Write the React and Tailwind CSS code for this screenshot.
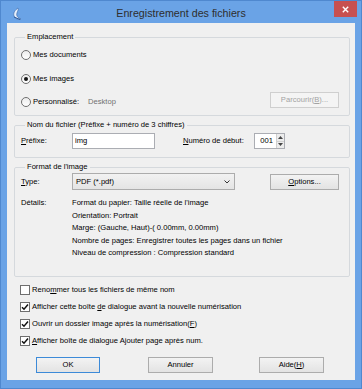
import React from "react";

const U = ({ children }) => <span className="underline underline-offset-[1px]">{children}</span>;

function Radio({ checked }) {
  return (
    <span className="w-[10px] h-[10px] shrink-0 rounded-full border border-[#6f6f6f] bg-gradient-to-b from-[#ececec] to-white flex items-center justify-center">
      {checked && <span className="w-[4px] h-[4px] rounded-full bg-[#151515]" />}
    </span>
  );
}

function Check({ checked }) {
  return (
    <span className="w-[10px] h-[10px] shrink-0 border border-[#6f6f6f] bg-white flex items-center justify-center">
      {checked && (
        <svg width="8" height="8" viewBox="0 0 8 8">
          <path d="M1 4.2 L3 6.2 L7 1.6" fill="none" stroke="#111" strokeWidth="1.5" />
        </svg>
      )}
    </span>
  );
}

function Btn({ children, disabled, def, className = "" }) {
  return (
    <div
      className={
        "h-[16px] flex items-center justify-center border " +
        (disabled
          ? "border-[#cfcfcf] bg-[#f4f4f4] text-[#a3a3a3] "
          : def
          ? "border-[#3c8ad8] bg-gradient-to-b from-[#f3f3f3] to-[#e3e3e3] text-black "
          : "border-[#acacac] bg-gradient-to-b from-[#f3f3f3] to-[#e3e3e3] text-black ") +
        className
      }
    >
      {children}
    </div>
  );
}

export default function App() {
  return (
    <div className="w-[362px] h-[389px] bg-[#6aa3e6] border border-[#4f88cf] flex flex-col font-['Liberation_Sans',Arial,sans-serif] text-[7.6px] leading-[10px] text-black">
      {/* Title bar */}
      <div className="h-[22px] shrink-0 grid grid-cols-[1fr_auto_1fr]">
        <div className="flex items-start pl-[11px] pt-[6px]">
          <svg width="10" height="14" viewBox="0 0 10 14">
            <path d="M6 1 C3 3 1 6 2 9 C3 12 7 13 9 12 C6 11 4 9 5 6 C5.5 4 7 2 6 1 Z" fill="#e8f0fb" stroke="#3f6fb0" strokeWidth="0.7" />
            <path d="M2 10 L8 12.5" stroke="#2d5a9c" strokeWidth="1" />
          </svg>
        </div>
        <div className="flex items-center text-[10.7px] text-[#2e2e2e] pt-[1px]">Enregistrement des fichiers</div>
        <div className="flex justify-end items-start pr-[4px]">
          <div className="w-[23px] h-[16px] bg-[#c75050] flex items-center justify-center">
            <svg width="7" height="7" viewBox="0 0 7 7">
              <path d="M0.8 0.8 L6.2 6.2 M6.2 0.8 L0.8 6.2" stroke="white" strokeWidth="1.4" />
            </svg>
          </div>
        </div>
      </div>

      {/* Client area */}
      <div className="mx-[6px] h-[357px] shrink-0 bg-[#f0f0f0] flex flex-col">
        {/* Emplacement */}
        <fieldset className="mt-[9px] ml-[7px] mr-[5px] border border-[#d5d9dd] rounded-[2px] pl-[6px] pr-[10px] pt-[6px] pb-[8px]">
          <legend className="ml-[4px] px-[2px] leading-[10px]">Emplacement</legend>
          <div className="h-[14px] flex items-center gap-[2px]">
            <Radio />
            <span>Mes documents</span>
          </div>
          <div className="h-[14px] mt-[10px] flex items-center gap-[2px]">
            <Radio checked />
            <span>Mes images</span>
          </div>
          <div className="h-[15px] mt-[6px] flex items-start">
            <div className="h-[14px] mt-[3px] flex items-center gap-[2px]">
              <Radio />
              <span className="w-[53px]">Personnalisé:</span>
              <span className="text-[#707070]">Desktop</span>
            </div>
            <Btn disabled className="ml-auto w-[69px] h-[15px]">
              Parcourir(<U>B</U>)...
            </Btn>
          </div>
        </fieldset>

        {/* Nom du fichier */}
        <fieldset className="mt-[4px] ml-[7px] mr-[5px] border border-[#d5d9dd] rounded-[2px] pl-[6px] pt-[3px] pb-[8px]">
          <legend className="ml-[4px] px-[2px] leading-[10px]">Nom du fichier (Préfixe + numéro de 3 chiffres)</legend>
          <div className="h-[16px] flex items-center">
            <span className="w-[51px]">
              <U>P</U>réfixe:
            </span>
            <div className="w-[83px] h-[16px] bg-white border border-[#abadb3] flex items-center pl-[2px]">img</div>
            <span className="ml-[28px] w-[71px]">
              <U>N</U>uméro de début:
            </span>
            <div className="w-[31px] h-[16px] bg-white border border-[#abadb3] flex items-center">
              <span className="flex-1 text-right pr-[3px]">001</span>
              <div className="w-[8px] h-full flex flex-col border-l border-[#d0d0d0]">
                <div className="flex-1 bg-[#ececec] flex items-center justify-center border-b border-[#d0d0d0]">
                  <svg width="5" height="3" viewBox="0 0 5 3"><path d="M0 3 L2.5 0 L5 3 Z" fill="#444" /></svg>
                </div>
                <div className="flex-1 bg-[#ececec] flex items-center justify-center">
                  <svg width="5" height="3" viewBox="0 0 5 3"><path d="M0 0 L2.5 3 L5 0 Z" fill="#444" /></svg>
                </div>
              </div>
            </div>
          </div>
        </fieldset>

        {/* Format de l'image */}
        <fieldset className="mt-[4px] ml-[7px] mr-[5px] border border-[#d5d9dd] rounded-[2px] pl-[6px] pt-[1px] pb-[16px]">
          <legend className="ml-[4px] px-[2px] leading-[10px]">Format de l'image</legend>
          <div className="h-[17px] flex items-center">
            <span className="w-[51px]">
              <U>T</U>ype:
            </span>
            <div className="w-[163px] h-[17px] border border-[#acacac] bg-gradient-to-b from-[#f2f2f2] to-[#e4e4e4] flex items-center pl-[3px] pr-[4px]">
              <span className="flex-1">PDF (*.pdf)</span>
              <svg width="6" height="4" viewBox="0 0 6 4">
                <path d="M0.5 0.5 L3 3 L5.5 0.5" fill="none" stroke="#333" strokeWidth="1" />
              </svg>
            </div>
            <Btn className="ml-[35px] w-[69px]">
              <U>O</U>ptions...
            </Btn>
          </div>
          <div className="mt-[7px] flex leading-[12.5px]">
            <span className="w-[51px] shrink-0">Détails:</span>
            <div className="flex flex-col">
              <span>Format du papier: Taille réelle de l'image</span>
              <span>Orientation: Portrait</span>
              <span>Marge: (Gauche, Haut)-( 0.00mm, 0.00mm)</span>
              <span>Nombre de pages: Enregistrer toutes les pages dans un fichier</span>
              <span>Niveau de compression : Compression standard</span>
            </div>
          </div>
        </fieldset>

        {/* Checkboxes */}
        <div className="mt-[7px] pl-[13px] flex flex-col gap-[5px]">
          <div className="h-[12px] flex items-center gap-[2px]">
            <Check />
            <span>
              Reno<U>m</U>mer tous les fichiers de même nom
            </span>
          </div>
          <div className="h-[12px] flex items-center gap-[2px]">
            <Check checked />
            <span>
              Afficher cette boîte <U>d</U>e dialogue avant la nouvelle numérisation
            </span>
          </div>
          <div className="h-[12px] flex items-center gap-[2px]">
            <Check checked />
            <span>
              Ouvrir un dossier image après la numérisation(<U>F</U>)
            </span>
          </div>
          <div className="h-[12px] flex items-center gap-[2px]">
            <Check checked />
            <span>
              <U>A</U>fficher boîte de dialogue Ajouter page après num.
            </span>
          </div>
        </div>

        {/* Buttons */}
        <div className="mt-[10px] pl-[29px] flex">
          <Btn def className="w-[64px]">OK</Btn>
          <Btn className="ml-[48px] w-[65px]">Annuler</Btn>
          <Btn className="ml-[46px] w-[65px]">
            Aide(<U>H</U>)
          </Btn>
        </div>
      </div>
    </div>
  );
}
